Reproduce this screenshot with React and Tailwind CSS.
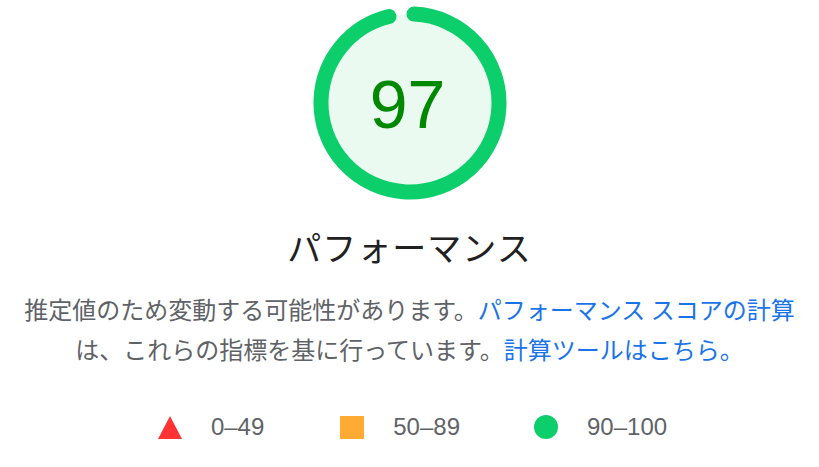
export default function App() {
  const r = 89;
  const c = 2 * Math.PI * r;
  const arc = 0.953;

  return (
    <div className="w-[819px] h-[467px] bg-white flex flex-col items-center overflow-hidden">
      {/* gauge */}
      <div className="relative w-[194px] h-[194px] mt-[6px] flex items-center justify-center">
        <svg className="absolute inset-0" width="194" height="194" viewBox="0 0 194 194">
          <circle cx="97" cy="97" r={r} fill="#ebfaf0" />
          <circle
            cx="97"
            cy="97"
            r={r}
            fill="none"
            stroke="#0cce6b"
            strokeWidth="15"
            strokeLinecap="round"
            strokeDasharray={`${c * arc} ${c}`}
            transform="rotate(-87.4 97 97)"
          />
        </svg>
        <span className="relative text-[68px] leading-none text-[#008800] font-['Liberation_Sans',Arial,sans-serif] mt-[2px] -ml-[4px]">
          97
        </span>
      </div>

      {/* title */}
      <h2 className="mt-[27px] text-[34px] leading-[40px] text-[#212121] font-['Noto_Sans_CJK_JP',sans-serif] tracking-[1px]">
        パフォーマンス
      </h2>

      {/* description */}
      <p className="mt-[22px] text-center text-[24px] leading-[40px] text-[#5f6368] font-['Noto_Sans_CJK_JP',sans-serif]">
        推定値のため変動する可能性があります。
        <a className="text-[#1a73e8]">パフォーマンス スコアの計算</a>
        <br />
        は、これらの指標を基に行っています。
        <a className="text-[#1a73e8]">計算ツールはこちら。</a>
      </p>

      {/* legend */}
      <div className="mt-[40px] ml-[6px] flex items-center text-[24px] text-[#5f6368] font-['Liberation_Sans',Arial,sans-serif]">
        <div className="flex items-center gap-[29px]">
          <svg width="24" height="23" viewBox="0 0 24 23">
            <polygon points="12,0 24,23 0,23" fill="#ff3333" />
          </svg>
          <span>0–49</span>
        </div>
        <div className="flex items-center gap-[29px] ml-[76px]">
          <div className="w-[24px] h-[23px] bg-[#ffaa33]" />
          <span>50–89</span>
        </div>
        <div className="flex items-center gap-[29px] ml-[74px]">
          <div className="w-[24px] h-[24px] rounded-full bg-[#0cce6b]" />
          <span>90–100</span>
        </div>
      </div>
    </div>
  );
}
